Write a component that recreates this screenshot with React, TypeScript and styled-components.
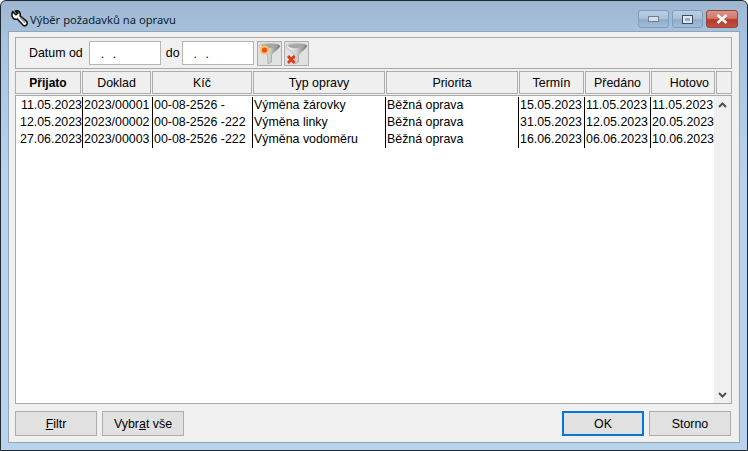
import { Fragment } from "react";
import styled, { createGlobalStyle } from "styled-components";

const columns = "66px 1px 69px 1px 99px 1px 132px 1px 132px 1px 65px 1px 65px 1px 64px 17px";

const headers = [
  { label: "Přijato", bold: true, width: 66 },
  { label: "Doklad", width: 69 },
  { label: "Kíč", width: 100 },
  { label: "Typ opravy", width: 132 },
  { label: "Priorita", width: 132 },
  { label: "Termín", width: 65 },
  { label: "Předáno", width: 65 },
  { label: "Hotovo", right: true, width: 64 },
];

const rows = [
  ["11.05.2023", "2023/00001", "00-08-2526 -", "Výměna žárovky", "Běžná oprava", "15.05.2023", "11.05.2023", "11.05.2023"],
  ["12.05.2023", "2023/00002", "00-08-2526 -222", "Výměna linky", "Běžná oprava", "31.05.2023", "12.05.2023", "20.05.2023"],
  ["27.06.2023", "2023/00003", "00-08-2526 -222", "Výměna vodoměru", "Běžná oprava", "16.06.2023", "06.06.2023", "10.06.2023"],
];

const GlobalStyle = createGlobalStyle`
  html, body {
    margin: 0;
    padding: 0;
    background: #fff;
  }
  * {
    box-sizing: border-box;
  }
`;

const Window = styled.div`
  width: 748px;
  height: 451px;
  display: flex;
  flex-direction: column;
  border: 1px solid #1f2a35;
  border-radius: 6px 6px 0 0;
  background: linear-gradient(180deg, #9fb6cf 0%, #a8c3df 8%, #b9d3ec 40%, #b9d3ec 100%);
  font-family: "Liberation Sans", Arial, sans-serif;
  font-size: 12.4px;
  color: #000;
  overflow: hidden;
`;

const TitleBar = styled.div`
  height: 30px;
  flex-shrink: 0;
  display: flex;
  align-items: flex-start;
  padding: 9px 9px 0 9px;
`;

const Title = styled.div`
  flex: 1;
  display: flex;
  align-items: center;
  gap: 1px;
  height: 19px;
  font-family: "Noto Sans", sans-serif;
  font-size: 11.2px;
  color: #10202e;
`;

const Controls = styled.div`
  display: flex;
  gap: 3px;
`;

const ControlButton = styled.div<{ $close?: boolean }>`
  width: ${(p) => (p.$close ? "32px" : "31px")};
  height: 18px;
  display: flex;
  align-items: center;
  justify-content: center;
  border: 1px solid ${(p) => (p.$close ? "#8a4a42" : "#7f9cb8")};
  border-radius: 3px;
  background: ${(p) =>
    p.$close
      ? "linear-gradient(180deg, #d99388 0%, #cf7a6c 45%, #b8392b 55%, #c0503f 100%)"
      : "linear-gradient(180deg, #b9cfe4 0%, #a9c3dc 45%, #8eaccb 55%, #a2bdd8 100%)"};
`;

const Body = styled.div`
  flex: 1;
  margin: 0 7px 7px 7px;
  padding: 5px 7px 6px 6px;
  display: flex;
  flex-direction: column;
  background: #f0f0f0;
  border: 1px solid #8fa5bb;
`;

const FilterBar = styled.div`
  height: 32px;
  flex-shrink: 0;
  display: flex;
  align-items: center;
  border: 1px solid #a9a9a9;
  padding-left: 13px;
`;

const FieldLabel = styled.span<{ $gap: number }>`
  margin-right: ${(p) => p.$gap}px;
`;

const DateInput = styled.div<{ $last?: boolean }>`
  width: 72px;
  height: 24px;
  background: #fff;
  border: 1px solid #b5b5b5;
  padding: 5px 0 0 11px;
  letter-spacing: 2.6px;
  margin-right: ${(p) => (p.$last ? "3px" : "5px")};
`;

const IconButton = styled.div`
  width: 25px;
  height: 25px;
  margin-right: 2px;
  display: flex;
  align-items: center;
  justify-content: center;
  background: #e1e1e1;
  border: 1px solid #adadad;
`;

const HeaderRow = styled.div`
  height: 23px;
  flex-shrink: 0;
  margin-top: 2px;
  display: flex;
  gap: 1px;
`;

const HeaderCell = styled.div<{ $width: number; $bold?: boolean; $right?: boolean }>`
  width: ${(p) => p.$width}px;
  display: flex;
  align-items: center;
  justify-content: ${(p) => (p.$right ? "flex-end" : "center")};
  padding-right: ${(p) => (p.$right ? "5px" : "0")};
  background: #efefef;
  border: 1px solid #adadad;
  font-weight: ${(p) => (p.$bold ? 700 : 400)};
  font-size: ${(p) => (p.$bold ? "12px" : "12.4px")};
`;

const ListBox = styled.div`
  position: relative;
  flex: 1;
  margin-top: 1px;
  padding-top: 1px;
  background: #fff;
  border: 1px solid #a9a9a9;
`;

const Table = styled.div`
  display: grid;
  grid-template-columns: ${columns};
  grid-auto-rows: 17px;
  width: 700px;
`;

const Cell = styled.div<{ $right?: boolean }>`
  line-height: 17px;
  white-space: nowrap;
  overflow: hidden;
  padding: 0 0 0 1px;
  text-align: ${(p) => (p.$right ? "right" : "left")};
`;

const Divider = styled.div`
  background: #000;
`;

const ScrollBar = styled.div`
  position: absolute;
  top: 0;
  right: 0;
  bottom: 0;
  width: 17px;
  display: flex;
  flex-direction: column;
  justify-content: space-between;
  align-items: center;
  background: #f0f0f0;
`;

const ScrollArrow = styled.div`
  width: 17px;
  height: 17px;
  display: flex;
  align-items: center;
  justify-content: center;
`;

const Footer = styled.div`
  height: 25px;
  flex-shrink: 0;
  margin-top: 7px;
  padding-right: 1px;
  display: flex;
  gap: 5px;
`;

const Spacer = styled.div`
  flex: 1;
`;

const Button = styled.div<{ $primary?: boolean }>`
  width: 82px;
  height: 25px;
  display: flex;
  align-items: center;
  justify-content: center;
  background: #e1e1e1;
  border: ${(p) => (p.$primary ? "2px solid #0078d7" : "1px solid #adadad")};
`;

const Mnemonic = styled.span`
  text-decoration: underline;
`;

const WrenchIcon = () => (
  <svg width="19" height="19" viewBox="0 0 18 18">
    <path
      d="M2.5 1.5 L5.5 4.5 L7.5 3 L5 1 C8 0 10.5 2.5 9.5 5.5 L15.5 10.5 C17.5 12.5 15 16.5 12.5 14.5 L7 8.5 C3.5 9.5 0.5 6.5 2.5 1.5 Z"
      fill="#fff"
      stroke="#111"
      strokeWidth="1.5"
      strokeLinejoin="round"
    />
    <path d="M9.5 7 L14.5 12" stroke="#9a9a9a" strokeWidth="1.6" />
  </svg>
);

const FunnelIcon = ({ clear }: { clear?: boolean }) => {
  const id = clear ? "funnelClear" : "funnelApply";
  return (
    <svg width="23" height="23" viewBox="0 0 23 23">
      <defs>
        <linearGradient id={id} x1="0" x2="1" y1="0" y2="0">
          <stop offset="0" stopColor="#fafafa" />
          <stop offset="0.5" stopColor="#d0d0d0" />
          <stop offset="1" stopColor="#707070" />
        </linearGradient>
      </defs>
      <path d="M1 4 C1 1 22 1 22 4 C21 7 15 10 13.5 13 L13.5 20 L10 22 L9.5 13 C8 10 2 7 1 4 Z" fill={`url(#${id})`} stroke="#8f8f8f" strokeWidth="0.5" />
      <ellipse cx="11.5" cy="4" rx="8.5" ry="2" fill="#a6a6a6" />
      {clear ? (
        <path d="M3 14 L9.5 21 M9.5 14 L3 21" stroke="#e0391a" strokeWidth="2.8" />
      ) : (
        <>
          <circle cx="6.5" cy="8" r="4.5" fill="#f7c552" />
          <circle cx="6.5" cy="8" r="2.6" fill="#ee4d20" />
        </>
      )}
    </svg>
  );
};

const App = () => {
  return (
    <>
      <GlobalStyle />
      <Window>
        <TitleBar>
          <Title>
            <WrenchIcon />
            Výběr požadavků na opravu
          </Title>
          <Controls>
            <ControlButton>
              <svg width="11" height="6"><rect x="0.5" y="0.5" width="10" height="5" fill="#d8dde3" stroke="#6f7f90" /></svg>
            </ControlButton>
            <ControlButton>
              <svg width="11" height="9"><rect x="0.5" y="0.5" width="10" height="8" fill="#dfe7ef" stroke="#3e4f60" /><rect x="3" y="3" width="5" height="3" fill="#8eaccb" /></svg>
            </ControlButton>
            <ControlButton $close>
              <svg width="14" height="10"><path d="M2.5 1 L11.5 9 M11.5 1 L2.5 9" stroke="#f4f4f4" strokeWidth="2.6" /></svg>
            </ControlButton>
          </Controls>
        </TitleBar>
        <Body>
          <FilterBar>
            <FieldLabel $gap={6}>Datum od</FieldLabel>
            <DateInput>. .</DateInput>
            <FieldLabel $gap={2}>do</FieldLabel>
            <DateInput $last>. .</DateInput>
            <IconButton><FunnelIcon /></IconButton>
            <IconButton><FunnelIcon clear /></IconButton>
          </FilterBar>
          <HeaderRow>
            {headers.map((h) => (
              <HeaderCell key={h.label} $width={h.width} $bold={h.bold} $right={h.right}>
                {h.label}
              </HeaderCell>
            ))}
            <HeaderCell $width={16} />
          </HeaderRow>
          <ListBox>
            <Table>
              {rows.map((row) => (
                <Fragment key={row[1]}>
                  {row.map((value, i) => (
                    <Fragment key={i}>
                      <Cell $right={i === 0}>{value}</Cell>
                      {i < 7 && <Divider />}
                    </Fragment>
                  ))}
                  <div />
                </Fragment>
              ))}
            </Table>
            <ScrollBar>
              <ScrollArrow>
                <svg width="9" height="6"><path d="M1 5 L4.5 1.5 L8 5" fill="none" stroke="#505050" strokeWidth="2" /></svg>
              </ScrollArrow>
              <ScrollArrow>
                <svg width="9" height="6"><path d="M1 1 L4.5 4.5 L8 1" fill="none" stroke="#505050" strokeWidth="2" /></svg>
              </ScrollArrow>
            </ScrollBar>
          </ListBox>
          <Footer>
            <Button><span><Mnemonic>F</Mnemonic>iltr</span></Button>
            <Button><span>Vybr<Mnemonic>a</Mnemonic>t vše</span></Button>
            <Spacer />
            <Button $primary>OK</Button>
            <Button>Storno</Button>
          </Footer>
        </Body>
      </Window>
    </>
  );
};

export default App;
